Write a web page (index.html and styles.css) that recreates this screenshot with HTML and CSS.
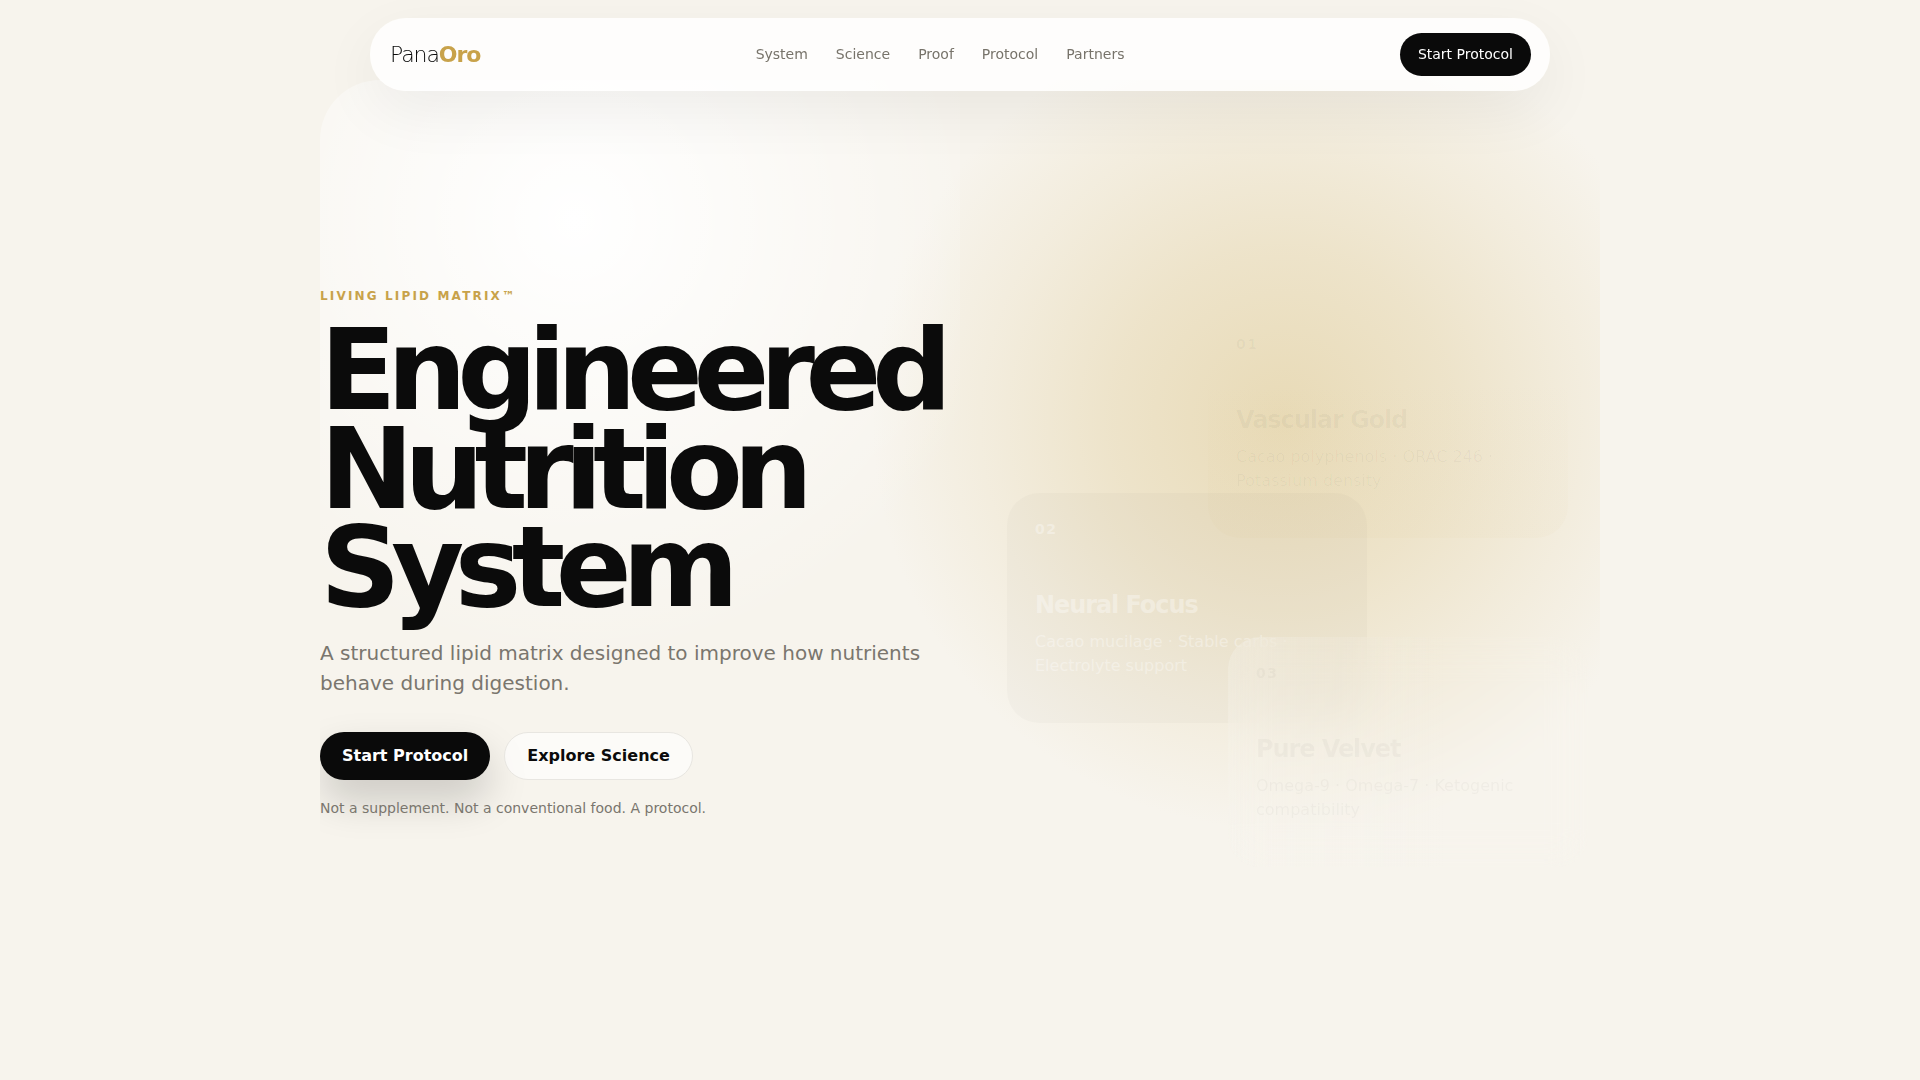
FILE: index.html
```html
<!DOCTYPE html>
<html lang="en">
<head>
    <meta charset="UTF-8">
    <meta name="viewport" content="width=device-width, initial-scale=1.0">
    <title>PanaOro</title>
    <link rel="stylesheet" href="styles.css">
</head>
<body>
    <header class="nav">
        <a class="logo" href="#">Pana<span>Oro</span></a>
        <nav class="nav-links">
            <a href="#">System</a>
            <a href="#">Science</a>
            <a href="#">Proof</a>
            <a href="#">Protocol</a>
            <a href="#">Partners</a>
        </nav>
        <a class="nav-cta" href="#">Start Protocol</a>
    </header>

    <main class="hero">
        <div class="hero-copy">
            <div class="eyebrow">LIVING LIPID MATRIX™</div>
            <h1>Engineered Nutrition System</h1>
            <p class="lead">A structured lipid matrix designed to improve how nutrients behave during digestion.</p>
            <div class="actions">
                <a class="btn btn-dark" href="#">Start Protocol</a>
                <a class="btn btn-light" href="#">Explore Science</a>
            </div>
            <p class="note">Not a supplement. Not a conventional food. A protocol.</p>
        </div>

        <div class="hero-cards">
            <article class="card card-gold">
                <div class="num">01</div>
                <h3>Vascular Gold</h3>
                <p>Cacao polyphenols · ORAC 246 · Potassium density</p>
            </article>
            <article class="card card-neural">
                <div class="num">02</div>
                <h3>Neural Focus</h3>
                <p>Cacao mucilage · Stable carbs · Electrolyte support</p>
            </article>
            <article class="card card-velvet">
                <div class="num">03</div>
                <h3>Pure Velvet</h3>
                <p>Omega-9 · Omega-7 · Ketogenic compatibility</p>
            </article>
        </div>
    </main>
</body>
</html>
```

FILE: styles.css
```css
* {
    box-sizing: border-box;
}
body {
    margin: 0;
    height: 1080px;
    overflow: hidden;
    background: #f7f4ed;
    font-family: "DejaVu Sans", sans-serif;
    color: #0b0b0b;
}
a {
    text-decoration: none;
    color: inherit;
}

.nav {
    position: fixed;
    top: 18px;
    left: 370px;
    z-index: 10;
    width: 1180px;
    height: 73px;
    padding: 0 19px 0 20px;
    display: flex;
    justify-content: space-between;
    align-items: center;
    background: rgba(255, 255, 255, 0.8);
    border-radius: 36px;
    box-shadow: 0 20px 60px rgba(0, 0, 0, 0.06);
}
.logo {
    font-size: 22px;
    font-weight: 200;
    letter-spacing: -0.05em;
}
.logo span {
    font-weight: 700;
    color: #c8a24a;
}
.nav-links {
    display: flex;
    gap: 28px;
    padding-bottom: 2px;
    font-size: 14px;
    color: #77736a;
}
.nav-cta {
    padding: 13px 18px;
    border-radius: 22px;
    background: #0a0a0a;
    color: #fff;
    font-size: 14px;
    line-height: 17px;
}

.hero {
    width: 1280px;
    margin: 0 auto;
    padding-top: 80px;
    display: grid;
    grid-template-columns: 640px 640px;
}
.hero-copy {
    position: relative;
    z-index: 1;
    height: 760px;
    padding-top: 209px;
    overflow: hidden;
    border-radius: 60px 0 0 0;
    background: radial-gradient(circle at 255px 140px, #fff 0, rgba(255, 255, 255, 0) 440px);
}
.eyebrow {
    font-size: 12px;
    line-height: 14px;
    font-weight: 700;
    letter-spacing: 0.18em;
    color: #c8a24a;
}
h1 {
    margin: 18px 0 21px;
    font-size: 112px;
    line-height: 0.88;
    font-weight: 700;
    letter-spacing: -0.085em;
    width: 640px;
}
.lead {
    margin: 0;
    width: 620px;
    font-size: 20px;
    line-height: 30px;
    color: #7a766e;
}
.actions {
    display: flex;
    gap: 14px;
    margin-top: 34px;
}
.btn {
    border-radius: 24px;
    font-size: 16px;
    font-weight: 700;
    line-height: 18px;
}
.btn-dark {
    padding: 15px 22px;
    background: #0a0a0a;
    color: #fff;
    box-shadow: 0 20px 40px rgba(0, 0, 0, 0.18);
}
.btn-light {
    padding: 14px 22px;
    background: rgba(255, 255, 255, 0.6);
    border: 1px solid #e8e6e1;
}
.note {
    margin: 20px 0 0;
    font-size: 14px;
    color: #7a766e;
}

.hero-cards {
    position: relative;
    height: 760px;
}
/* glow runs past the column on the left, under the headline */
.hero-cards::before {
    content: "";
    position: absolute;
    top: 0;
    right: 0;
    bottom: 0;
    left: -120px;
    background: radial-gradient(circle at 442px 340px, #e8dab6 0, rgba(232, 218, 182, 0.64) 170px, rgba(232, 218, 182, 0.3) 290px, rgba(247, 244, 237, 0) 410px);
}
.card {
    position: absolute;
    width: 360px;
    height: 230px;
    padding: 28px;
    border-radius: 32px;
}
.card .num {
    font-size: 14px;
    line-height: 17px;
    font-weight: 700;
    letter-spacing: 0.1em;
    margin-bottom: 53px;
}
.card h3 {
    margin: 0 0 11px;
    font-size: 24px;
    line-height: 28px;
    letter-spacing: -0.045em;
}
.card p {
    margin: 0;
    font-size: 16px;
    line-height: 24px;
}
.card-gold {
    left: 248px;
    top: 228px;
    background: linear-gradient(180deg, rgba(200, 162, 74, 0) 30%, rgba(200, 162, 74, 0.03));
    color: rgba(0, 0, 0, 0.035);
}
.card-neural {
    left: 47px;
    top: 413px;
    background: rgba(0, 0, 0, 0.02);
    color: rgba(255, 255, 255, 0.35);
}
.card-velvet {
    left: 268px;
    top: 557px;
    background: linear-gradient(90deg, rgba(247, 244, 237, 0.3), rgba(247, 244, 237, 0) 60%);
    backdrop-filter: blur(18px);
    color: rgba(0, 0, 0, 0.03);
}
```
